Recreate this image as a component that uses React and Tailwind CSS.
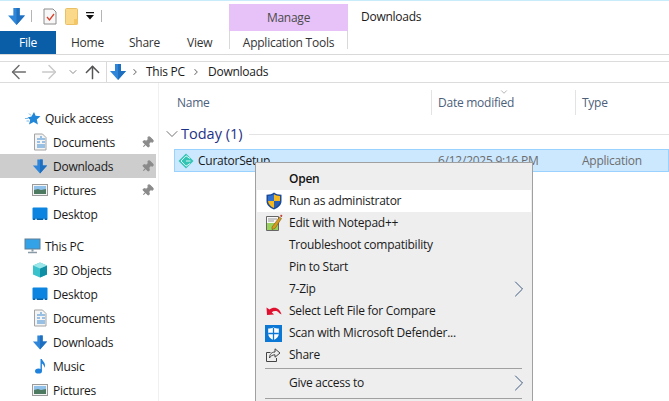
import { ArrowLeft, ArrowRight, ArrowUp, ChevronDown, ChevronRight, Pin } from "lucide-react";

const font = { fontFamily: '"Open Sans", "Noto Sans", sans-serif' };

function DownloadArrow({ size = 18 }) {
  return (
    <svg width={size} height={size} viewBox="0 0 18 18">
      <path d="M6 1h6v7h5L9 17 1 8h5z" fill="#2f86d9" />
      <path d="M9 1h3v7h5L9 17z" fill="#1f6fc0" />
    </svg>
  );
}

function DocIcon() {
  return (
    <svg width="16" height="18" viewBox="0 0 16 18">
      <path d="M2.5 1h8l3.5 3.500v12.500h-11.500z" fill="#f4f4f4" stroke="#a3a3a3" />
      <path d="M8 4h2M5 6h8M5 9h3M10 9h3M5 12h8M5 14h8" stroke="#3d8bd4" strokeWidth="1.200" />
    </svg>
  );
}

function PicturesIcon() {
  return (
    <svg width="16" height="14" viewBox="0 0 16 14">
      <rect x="0.500" y="1.500" width="15" height="11" fill="#f4f4f4" stroke="#9a9a9a" />
      <rect x="2" y="3" width="12" height="4" fill="#8fc1ea" />
      <path d="M2 7l4-1 3 1 5-1v5H2z" fill="#4f7a62" />
    </svg>
  );
}

function DesktopIcon() {
  return (
    <svg width="16" height="14" viewBox="0 0 16 14">
      <rect x="0.500" y="0.500" width="15" height="12.500" rx="1" fill="#0a84e0" />
      <rect x="1" y="11.500" width="14" height="1.500" fill="#0560a8" />
      <path d="M3 12.300h2M11 12.300h2" stroke="#d8eefc" />
    </svg>
  );
}

function ThisPcIcon() {
  return (
    <svg width="17" height="16" viewBox="0 0 17 16">
      <rect x="1" y="1" width="15" height="10" fill="#34a2e6" stroke="#5e7f96" />
      <path d="M8.500 11v2.500" stroke="#8a9aa6" strokeWidth="2" />
      <path d="M4 14.500h9" stroke="#8a9aa6" strokeWidth="1.500" />
    </svg>
  );
}

function CubeIcon() {
  return (
    <svg width="16" height="16" viewBox="0 0 16 16">
      <path d="M8 0.500l7 3v9l-7 3-7-3v-9z" fill="#39c1cc" />
      <path d="M8 6.500l7-3v9l-7 3z" fill="#0f8fa6" />
      <path d="M8 0.500l7 3-7 3-7-3z" fill="#9ae6e8" />
    </svg>
  );
}

function MusicIcon() {
  return (
    <svg width="12" height="16" viewBox="0 0 12 16">
      <ellipse cx="4.500" cy="13" rx="3.500" ry="2.600" fill="#1f82dc" />
      <path d="M6.500 13V1h1.400c.3 2 3.100 3 3.100 6.500 0 1-.3 1.700-.7 2.300.1-2.400-1.500-3.700-2.400-4.300V13z" fill="#1f82dc" />
    </svg>
  );
}

function StarIcon() {
  return (
    <svg width="17" height="15" viewBox="0 0 17 15">
      <path d="M10 1l1.600 3.800 4.900.5-3.700 3.300 1.100 5-4.300-2.700L5 13.500l1.200-4.800-2.700-2.300 4-1z" fill="#1f86d8" />
      <path d="M1 7.500h3M2.500 10h2.500M5 2.500l2 2" stroke="#7db9e8" />
    </svg>
  );
}

function CuratorIcon() {
  return (
    <svg width="16" height="16" viewBox="0 0 16 16">
      <path d="M8 0.500L15.500 8 8 15.500 0.500 8z" fill="#33c4b4" />
      <path d="M12 5.500L8 2.800 3 8l5 5.200 4-2.700M12.500 8H8" fill="none" stroke="#d8f6f2" strokeWidth="1" />
    </svg>
  );
}

function ShieldIcon() {
  return (
    <svg width="16" height="18" viewBox="0 0 16 18">
      <path d="M8 0.500c2 1.500 4 2.200 7.500 2.200V9c0 4-3 6.800-7.500 8.500C3.500 15.800.5 13 .5 9V2.700C4 2.700 6 2 8 .5z" fill="#1c4a96" />
      <path d="M8 2.200V9H2V3.900c2.500 0 4.300-.6 6-1.700z" fill="#2f6fd0" />
      <path d="M8 2.200c1.700 1.100 3.500 1.700 6 1.700V9H8z" fill="#f5b81f" />
      <path d="M2 9h6v7C5 14.800 2.300 12.500 2 9z" fill="#f5b81f" />
      <path d="M8 9h6c-.3 3.500-3 5.800-6 7z" fill="#2a5fb5" />
    </svg>
  );
}

function NotepadIcon() {
  return (
    <svg width="18" height="18" viewBox="0 0 18 18">
      <path d="M1.500 2.500h12v14h-12z" fill="#f7f7f7" stroke="#666" />
      <rect x="2" y="9" width="11" height="7" fill="#9ad35c" />
      <path d="M3 5h9M3 7h6" stroke="#999" />
      <path d="M7 13l7.500-10 2 1.500L10 14.500l-3 1z" fill="#d99a1c" stroke="#5a4a1c" strokeWidth="0.500" />
      <path d="M15 2l1-1.500 1.500 1.200-1 1.500z" fill="#c0392b" />
    </svg>
  );
}

function UndoIcon() {
  return (
    <svg width="16" height="12" viewBox="0 0 16 12">
      <path d="M0.500 2.500L1 10l7-.5-2.300-2.300C8 5.500 11.500 5.500 13 8l2.500 1.500C14 3.500 8.500 0.500 3.500 4.500z" fill="#e0102f" />
    </svg>
  );
}

function DefenderIcon() {
  return (
    <svg width="17" height="17" viewBox="0 0 16 16">
      <rect width="16" height="16" fill="#0a78d4" />
      <path d="M8 2c1.500 1 3 1.300 5 1.300V8c0 3-2 5-5 6-3-1-5-3-5-6V3.300C5 3.300 6.500 3 8 2z" fill="#fff" />
      <path d="M7.400 2.500h1.200V14H7.400zM3 7.400h10v1.200H3z" fill="#0a78d4" />
    </svg>
  );
}

function ShareIcon() {
  return (
    <svg width="15" height="14" viewBox="0 0 15 14" fill="none" stroke="#444">
      <path d="M4.500 4.500H.5v9h10V10" />
      <path d="M9 .8l5 4.200-5 4.200V6.800C6.500 6.800 4.500 8 3.500 10c0-3.500 2-6 5.500-6z" />
    </svg>
  );
}

function NavRow({ icon, label, pinned, active, indent = true }) {
  return (
    <div className={`flex h-6 items-center ${active ? "bg-[#cdcdcd]" : ""}`}>
      <div className={`flex shrink-0 justify-center ${indent ? "ml-[32px] w-[16px]" : "ml-[24px] w-[17px]"}`}>{icon}</div>
      <span className={`flex-1 pt-[1px] text-[#1a1a1a] ${indent ? "ml-[5px]" : "ml-[4px]"}`}>{label}</span>
      {pinned && <Pin size={13} className="mr-[2px] rotate-45 text-[#8a8a8a]" fill="#8a8a8a" />}
    </div>
  );
}

function MenuItem({ icon, label, bold, hover, arrow }) {
  return (
    <div className={`relative flex h-[22px] items-center ${hover ? "bg-white" : ""}`}>
      <div className="flex w-[32px] shrink-0 justify-center pl-[1px]">{icon}</div>
      <span className={bold ? "font-semibold text-[#111]" : "text-[#1a1a1a]"}>{label}</span>
      {arrow && <ChevronRight size={28} strokeWidth={0.800} className="ml-auto mr-[-2px] text-[#30507a]" />}
    </div>
  );
}

export default function App() {
  return (
    <div className="relative flex h-[401px] w-[669px] flex-col overflow-hidden bg-white text-[12px] leading-none tracking-[-0.25px]" style={font}>
      <div className="h-[1px] shrink-0 bg-[#c9ecfb]" />

      {/* quick access bar */}
      <div className="flex h-[30px] shrink-0 items-stretch">
        <div className="flex w-[229px] items-center pl-[7px]">
          <DownloadArrow size={19} />
          <div className="ml-[5px] h-[12px] w-px bg-[#b5b5b5]" />
          <svg width="14" height="17" viewBox="0 0 14 17" className="ml-[11px]">
            <path d="M1 1h9l3 3v12H1z" fill="#f7f7f7" stroke="#8c8c8c" />
            <path d="M4 9l2.500 3L11 6" fill="none" stroke="#d9412b" strokeWidth="1.300" />
          </svg>
          <svg width="13" height="17" viewBox="0 0 13 17" className="ml-[8px]">
            <rect x="0.500" y="0.500" width="12" height="16" rx="1" fill="#fbd98a" stroke="#eabf66" />
            <rect x="9" y="11" width="3.500" height="5.500" fill="#f3c766" />
          </svg>
          <svg width="8" height="8" viewBox="0 0 8 8" className="ml-[8px]">
            <path d="M0 0h8v1.300H0zM0 3h8L4 7.500z" fill="#111" />
          </svg>
          <div className="ml-[7px] h-[12px] w-px bg-[#b5b5b5]" />
        </div>
        <div className="mt-[3px] flex w-[119px] items-center justify-center bg-[#e6c2f8] pt-[1px] text-[#4a4a4a]">Manage</div>
        <div className="ml-[13px] pt-[10px] text-[#1a1a1a]">Downloads</div>
      </div>

      {/* ribbon tabs */}
      <div className="flex h-[24px] shrink-0 border-b border-[#d9d9d9]">
        <div className="flex w-[56px] items-center justify-center bg-[#0a5ea8] text-white">File</div>
        <div className="flex w-[173px] items-center text-[#333]">
          <span className="ml-[15px] w-[58px]">Home</span>
          <span className="w-[58px]">Share</span>
          <span>View</span>
        </div>
        <div className="flex h-[18px] w-[119px] items-start justify-center border-x border-[#d9d9d9] pt-[6px] text-[#333]">Application Tools</div>
      </div>

      {/* address bar */}
      <div className="mt-[6px] flex h-[22px] shrink-0 items-stretch border-y border-[#dcdcdc]">
        <div className="flex w-[106px] items-center pl-[8px]">
          <ArrowLeft size={22} strokeWidth={1.600} className="text-[#6d6d6d]" />
          <ArrowRight size={22} strokeWidth={1.600} className="ml-[8px] text-[#c9c9c9]" />
          <ChevronDown size={12} strokeWidth={2} className="ml-[7px] text-[#8a8a8a]" />
          <ArrowUp size={21} strokeWidth={1.700} className="ml-[3px] text-[#555]" />
        </div>
        <div className="flex flex-1 items-center border-l border-[#d9d9d9] pl-[2px] text-[#1a1a1a]">
          <DownloadArrow size={18} />
          <ChevronRight size={10} strokeWidth={2.500} className="ml-[3px] text-[#777]" />
          <span className="ml-[6px] w-[45px]">This PC</span>
          <ChevronRight size={10} strokeWidth={2.500} className="text-[#777]" />
          <span className="ml-[7px]">Downloads</span>
        </div>
      </div>

      <div className="flex min-h-0 flex-1">
        {/* nav pane */}
        <div className="w-[159px] shrink-0 border-r border-[#f0f0f0] pt-[23px]">
          <div className="w-[156px]">
            <NavRow indent={false} label="Quick access" icon={<StarIcon />} />
            <NavRow label="Documents" icon={<DocIcon />} pinned />
            <NavRow label="Downloads" icon={<DownloadArrow size={17} />} pinned active />
            <NavRow label="Pictures" icon={<PicturesIcon />} pinned />
            <NavRow label="Desktop" icon={<DesktopIcon />} />
            <div className="h-[8px]" />
            <NavRow indent={false} label="This PC" icon={<ThisPcIcon />} />
            <NavRow label="3D Objects" icon={<CubeIcon />} />
            <NavRow label="Desktop" icon={<DesktopIcon />} />
            <NavRow label="Documents" icon={<DocIcon />} />
            <NavRow label="Downloads" icon={<DownloadArrow size={17} />} />
            <NavRow label="Music" icon={<MusicIcon />} />
            <NavRow label="Pictures" icon={<PicturesIcon />} />
          </div>
        </div>

        {/* file list */}
        <div className="min-w-0 flex-1">
          <div className="flex h-[32px] items-end text-[#4c607a]">
            <div className="flex h-[25px] w-[272px] items-center pl-[18px] pt-[1px]">Name</div>
            <div className="relative flex h-[25px] w-[144px] items-center border-l border-[#e3e3e3] pl-[6px] pt-[1px]">
              Date modified
              <ChevronDown size={10} strokeWidth={1.500} className="absolute left-[67px] top-[-3px] text-[#8a8a8a]" />
            </div>
            <div className="flex h-[25px] flex-1 items-center border-l border-[#e3e3e3] pl-[6px] pt-[1px]">Type</div>
          </div>
          <div className="mt-[10px] flex h-[18px] items-center pl-[3px]">
            <ChevronDown size={20} strokeWidth={1} className="text-[#555]" />
            <span className="ml-[-1px] text-[14.500px] tracking-normal text-[#1e3287]">Today (1)</span>
            <div className="ml-[6px] h-px flex-1 bg-[#e3e3e3]" />
          </div>
          <div className="ml-[15px] mt-[6px] flex h-[23px] items-center border border-[#99d1ff] bg-[#cce8ff]">
            <div className="ml-[3px]"><CuratorIcon /></div>
            <span className="ml-[4px] w-[240px] text-[#1a1a1a]">CuratorSetup</span>
            <span className="w-[144px] text-[#6d6d6d]">6/12/2025 9:16 PM</span>
            <span className="text-[#6d6d6d]">Application</span>
          </div>
        </div>
      </div>

      {/* context menu */}
      <div className="absolute left-[255px] top-[162px] w-[278px] border border-[#a0a0a0] bg-[#eeeeee] p-[1px] pb-[2px]">
        <div className="pt-[4px]">
          <MenuItem label="Open" bold />
          <MenuItem label="Run as administrator" hover icon={<ShieldIcon />} />
          <MenuItem label="Edit with Notepad++" icon={<NotepadIcon />} />
          <MenuItem label="Troubleshoot compatibility" />
          <MenuItem label="Pin to Start" />
          <MenuItem label="7-Zip" arrow />
          <MenuItem label="Select Left File for Compare" icon={<UndoIcon />} />
          <MenuItem label="Scan with Microsoft Defender..." icon={<DefenderIcon />} />
          <MenuItem label="Share" icon={<ShareIcon />} />
          <div className="ml-[8px] mr-[9px] mb-[3px] mt-[2px] h-px bg-[#a0a0a0]" />
          <MenuItem label="Give access to" arrow />
          <div className="ml-[8px] mr-[9px] mt-[4px] h-px bg-[#a0a0a0]" />
        </div>
      </div>
    </div>
  );
}
